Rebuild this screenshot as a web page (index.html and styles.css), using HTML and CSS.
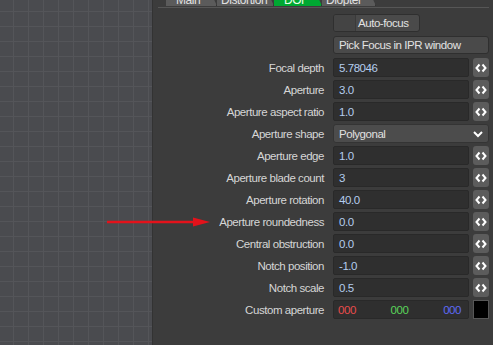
FILE: index.html
```html
<!DOCTYPE html>
<html>
<head>
<meta charset="utf-8">
<link rel="stylesheet" href="styles.css">
</head>
<body>
<div class="app">
  <div class="viewport"></div>
  <div class="panel">
    <div class="tabbar">
      <div class="tab tab-main">Main</div>
      <div class="tab tab-dist">Distortion</div>
      <div class="tab tab-dof active">DOF</div>
      <div class="tab tab-diop">Diopter</div>
    </div>
    <div class="form">
      <div class="row"><div class="label"></div><div class="ctrl"><button class="btn btn-af"><span class="af-check"></span><span class="af-text">Auto-focus</span></button></div></div>
      <div class="row"><div class="label"></div><div class="ctrl"><button class="btn btn-wide">Pick Focus in IPR window</button></div></div>
      <div class="row"><div class="label">Focal depth</div><div class="ctrl"><div class="field">5.78046</div><div class="step"><svg viewBox="0 0 16 16" width="16" height="16"><path d="M6.5 4.5 3.5 8 6.5 11.5M9.5 4.5 12.5 8 9.5 11.5" fill="none" stroke="#fff" stroke-width="2"/></svg></div></div></div>
      <div class="row"><div class="label">Aperture</div><div class="ctrl"><div class="field">3.0</div><div class="step"><svg viewBox="0 0 16 16" width="16" height="16"><path d="M6.5 4.5 3.5 8 6.5 11.5M9.5 4.5 12.5 8 9.5 11.5" fill="none" stroke="#fff" stroke-width="2"/></svg></div></div></div>
      <div class="row"><div class="label">Aperture aspect ratio</div><div class="ctrl"><div class="field">1.0</div><div class="step"><svg viewBox="0 0 16 16" width="16" height="16"><path d="M6.5 4.5 3.5 8 6.5 11.5M9.5 4.5 12.5 8 9.5 11.5" fill="none" stroke="#fff" stroke-width="2"/></svg></div></div></div>
      <div class="row"><div class="label">Aperture shape</div><div class="ctrl"><div class="select"><span>Polygonal</span><svg viewBox="0 0 12 12" width="12" height="12"><path d="M2 4 6 8 10 4" fill="none" stroke="#fff" stroke-width="2"/></svg></div></div></div>
      <div class="row"><div class="label">Aperture edge</div><div class="ctrl"><div class="field">1.0</div><div class="step"><svg viewBox="0 0 16 16" width="16" height="16"><path d="M6.5 4.5 3.5 8 6.5 11.5M9.5 4.5 12.5 8 9.5 11.5" fill="none" stroke="#fff" stroke-width="2"/></svg></div></div></div>
      <div class="row"><div class="label">Aperture blade count</div><div class="ctrl"><div class="field">3</div><div class="step"><svg viewBox="0 0 16 16" width="16" height="16"><path d="M6.5 4.5 3.5 8 6.5 11.5M9.5 4.5 12.5 8 9.5 11.5" fill="none" stroke="#fff" stroke-width="2"/></svg></div></div></div>
      <div class="row"><div class="label">Aperture rotation</div><div class="ctrl"><div class="field">40.0</div><div class="step"><svg viewBox="0 0 16 16" width="16" height="16"><path d="M6.5 4.5 3.5 8 6.5 11.5M9.5 4.5 12.5 8 9.5 11.5" fill="none" stroke="#fff" stroke-width="2"/></svg></div></div></div>
      <div class="row"><div class="label">Aperture roundedness</div><div class="ctrl"><div class="field">0.0</div><div class="step"><svg viewBox="0 0 16 16" width="16" height="16"><path d="M6.5 4.5 3.5 8 6.5 11.5M9.5 4.5 12.5 8 9.5 11.5" fill="none" stroke="#fff" stroke-width="2"/></svg></div></div></div>
      <div class="row"><div class="label">Central obstruction</div><div class="ctrl"><div class="field">0.0</div><div class="step"><svg viewBox="0 0 16 16" width="16" height="16"><path d="M6.5 4.5 3.5 8 6.5 11.5M9.5 4.5 12.5 8 9.5 11.5" fill="none" stroke="#fff" stroke-width="2"/></svg></div></div></div>
      <div class="row"><div class="label">Notch position</div><div class="ctrl"><div class="field">-1.0</div><div class="step"><svg viewBox="0 0 16 16" width="16" height="16"><path d="M6.5 4.5 3.5 8 6.5 11.5M9.5 4.5 12.5 8 9.5 11.5" fill="none" stroke="#fff" stroke-width="2"/></svg></div></div></div>
      <div class="row"><div class="label">Notch scale</div><div class="ctrl"><div class="field">0.5</div><div class="step"><svg viewBox="0 0 16 16" width="16" height="16"><path d="M6.5 4.5 3.5 8 6.5 11.5M9.5 4.5 12.5 8 9.5 11.5" fill="none" stroke="#fff" stroke-width="2"/></svg></div></div></div>
      <div class="row"><div class="label">Custom aperture</div><div class="ctrl"><div class="field rgb"><span class="r">000</span><span class="g">000</span><span class="b">000</span></div><div class="swatch"></div></div></div>
    </div>
  </div>
  <svg class="arrow" width="104" height="12" viewBox="0 0 104 12"><path d="M0 6H88" stroke="#e3121b" stroke-width="2.5"/><path d="M86 1.5 103 6 86 10.5Z" fill="#e3121b"/></svg>
</div>
</body>
</html>
```

FILE: styles.css
```css
* { box-sizing: border-box; }
html, body { margin: 0; padding: 0; }
body {
  width: 493px;
  height: 345px;
  overflow: hidden;
  background: #3c3c3c;
  font-family: "Liberation Sans", Arial, sans-serif;
  font-size: 11.5px;
  letter-spacing: -0.45px;
  color: #d6d6d6;
}
.app {
  position: relative;
  display: flex;
  height: 345px;
}
.viewport {
  width: 153px;
  flex: none;
  background-color: #4a4b4f;
  background-image:
    linear-gradient(to right, #545559 1px, transparent 1px),
    linear-gradient(to bottom, #545559 1px, transparent 1px);
  background-size: 15px 15px;
  background-position: 13px 11px;
  border-right: 1px solid #333;
}
.panel {
  flex: 1;
  display: flex;
  flex-direction: column;
  padding-right: 4px;
}
.tabbar {
  height: 8px;
  margin-left: 5px;
  padding-left: 8px;
  display: flex;
  align-items: flex-end;
  overflow: hidden;
  border-bottom: 1px solid #565656;
}
.tab {
  height: 18px;
  flex: none;
  background: #5b5b5b;
  color: #e0e0e0;
  font-size: 12px;
  line-height: 12px;
  padding-top: 6px;
  padding-left: 10px;
  margin-bottom: 1px;
  clip-path: polygon(0 0, calc(100% - 8px) 0, 100% 100%, 0 100%);
  border-right: 1px solid #2c2c2c;
  white-space: nowrap;
}
.tab-main { width: 51px; }
.tab-dist { width: 57px; padding-left: 4px; }
.tab-dof { width: 48px; padding-left: 10px; }
.tab-diop { width: 54px; padding-left: 4px; }
.tab.active { background: #00a832; color: #e8ffe8; }
.form {
  display: flex;
  flex-direction: column;
  gap: 3px;
  padding-top: 6px;
}
.row {
  display: flex;
  align-items: center;
  height: 19px;
}
.label {
  flex: 1;
  text-align: right;
  padding-right: 9px;
  white-space: nowrap;
}
.ctrl {
  width: 156px;
  flex: none;
  display: flex;
  gap: 4px;
  height: 19px;
}
.btn {
  font: inherit;
  letter-spacing: inherit;
  color: #e2e2e2;
  background: #4a4a4a;
  border: 1px solid #2f2f2f;
  border-radius: 3px;
  height: 18px;
  padding: 0;
  margin: 0;
  display: flex;
  align-items: center;
}
.btn-af { width: 87px; overflow: hidden; }
.af-check {
  width: 22px;
  height: 100%;
  background: #444;
  border-right: 1px solid #3a3a3a;
}
.af-text { padding-left: 2px; }
.btn-wide { width: 157px; padding-left: 5px; }
.field {
  width: 136px;
  height: 19px;
  background: #2f2f2f;
  border: 1px solid #292929;
  border-radius: 2px;
  color: #b4cdee;
  padding-left: 5px;
  display: flex;
  align-items: center;
}
.step {
  width: 16px;
  height: 19px;
  background: #5c5c5c;
  border-radius: 3px;
  display: flex;
  align-items: center;
  justify-content: center;
}
.select {
  width: 156px;
  height: 19px;
  background: #4c4c4c;
  border: 1px solid #343434;
  border-radius: 3px;
  color: #e0e0e0;
  padding: 0 4px 0 5px;
  display: flex;
  align-items: center;
  justify-content: space-between;
}
.rgb {
  justify-content: space-between;
  padding: 0 7px 0 4px;
}
.r { color: #e84c4c; }
.g { color: #5ad45a; }
.b { color: #5e6af6; }
.swatch {
  width: 16px;
  height: 19px;
  background: #000;
  border: 1px solid #575757;
}
.arrow {
  position: absolute;
  left: 107px;
  top: 216px;
}
```
